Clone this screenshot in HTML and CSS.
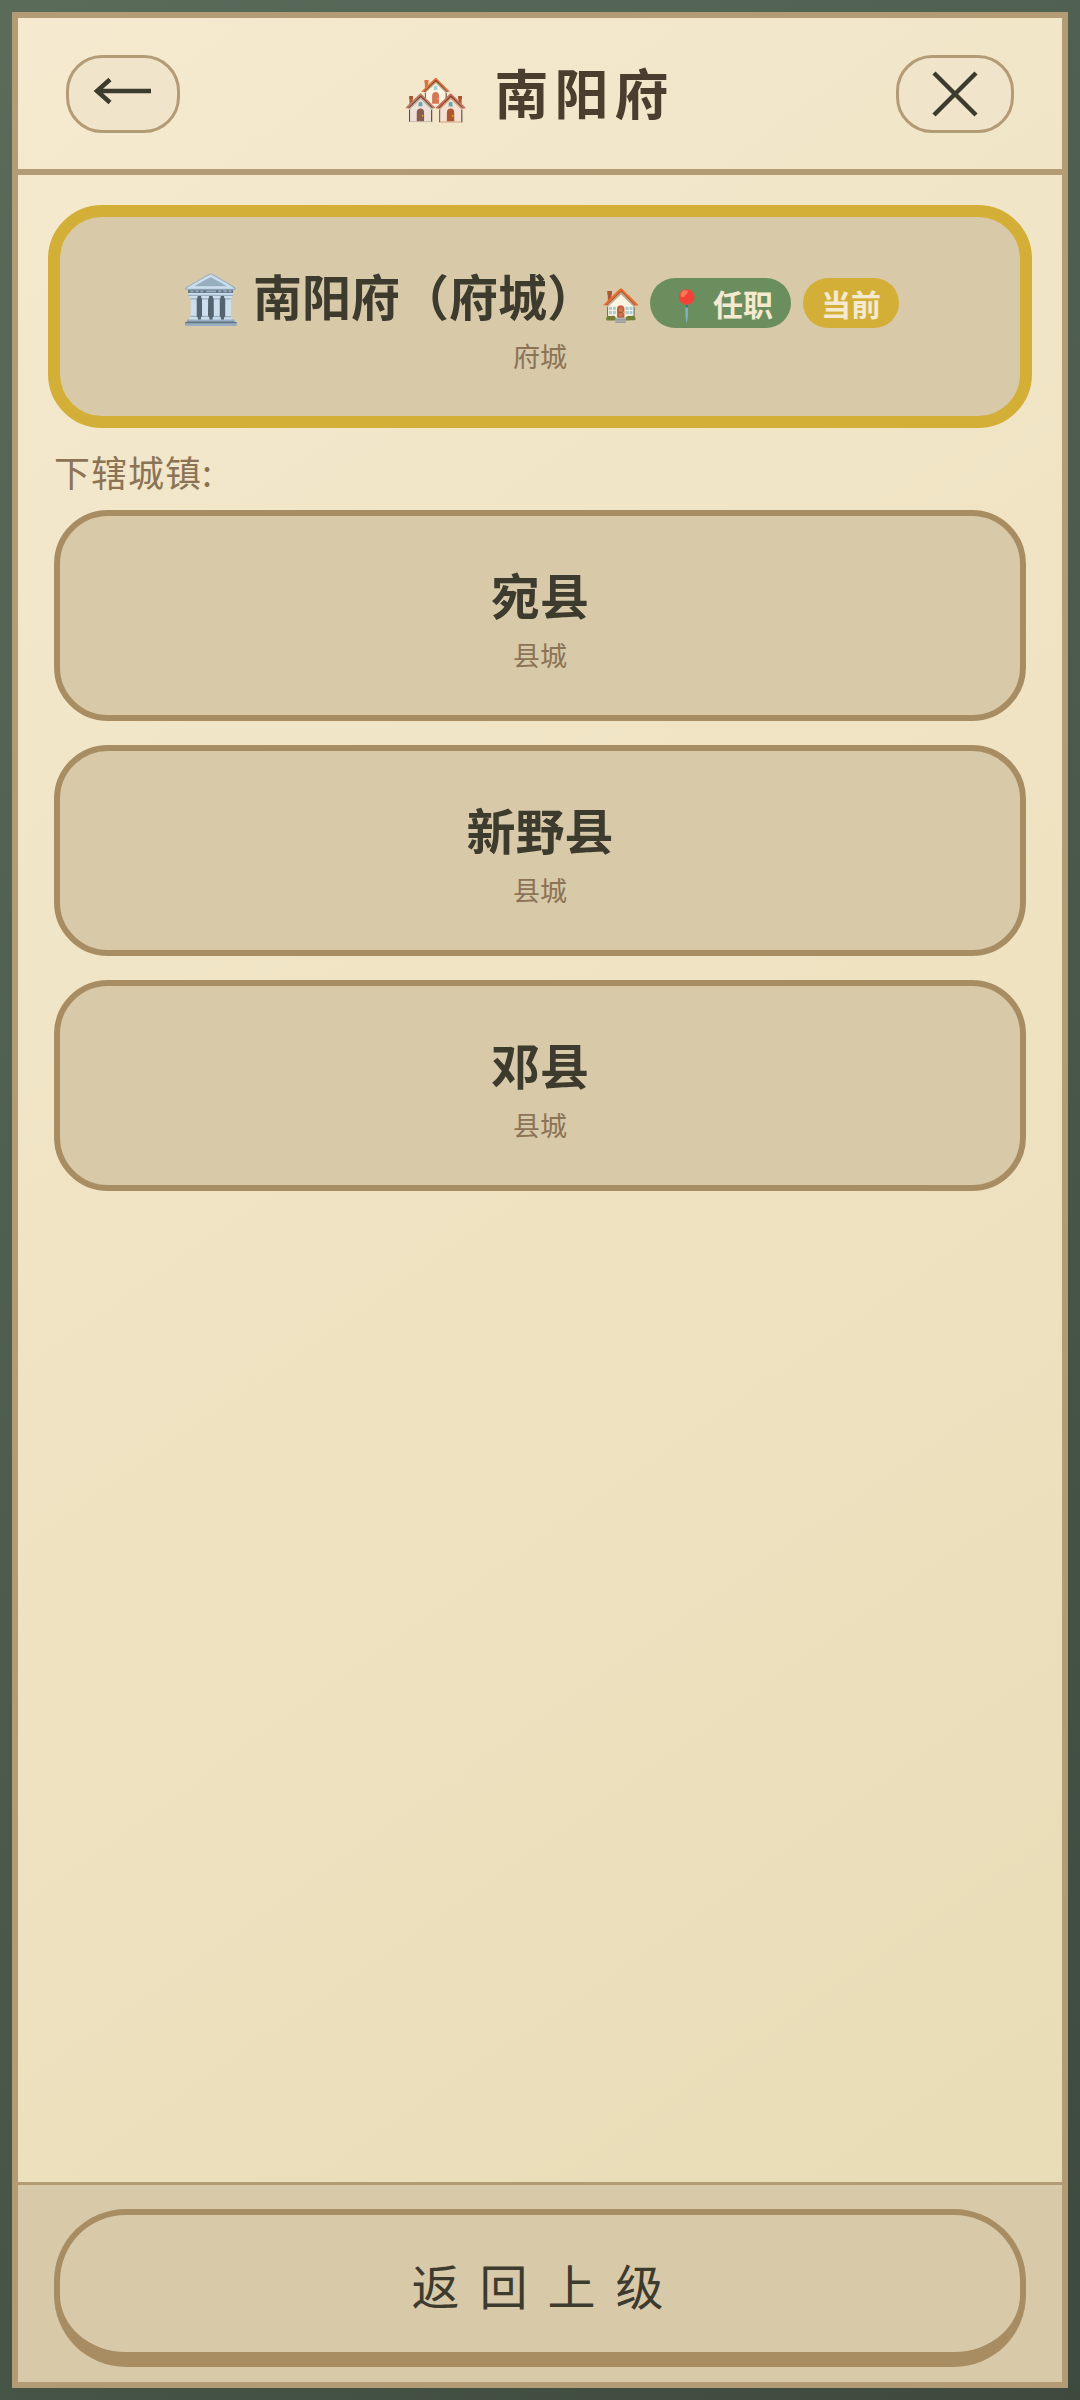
FILE: index.html
```html
<!DOCTYPE html>
<html lang="zh-CN">
<head>
<meta charset="utf-8">
<title>南阳府</title>
<link rel="stylesheet" href="styles.css">
</head>
<body>
<div class="frame">
  <header class="head">
    <button class="nav nav-back"><svg class="nav-icon" width="60" height="36" viewBox="0 0 60 36"><path d="M58 18H4M17 6.5 4 18 17 29.5" fill="none" stroke="#3d3a2e" stroke-width="4.5"/></svg></button>
    <h1 class="title"><span class="title-icon">🏘️</span><span class="title-text">南阳府</span></h1>
    <button class="nav nav-close"><svg class="nav-icon" width="48" height="48" viewBox="0 0 48 48"><path d="M3 3 45 45M45 3 3 45" fill="none" stroke="#3d3a2e" stroke-width="4.5"/></svg></button>
  </header>
  <main class="body">
    <section class="card card-current">
      <div class="card-line">
        <span class="card-icon">🏛️</span>
        <span class="card-name">南阳府（府城）</span>
        <span class="small-icon">🏠</span>
        <span class="badge badge-green"><span class="pin">📍</span>任职</span>
        <span class="badge badge-gold">当前</span>
      </div>
      <div class="card-sub">府城</div>
    </section>
    <div class="label">下辖城镇:</div>
    <section class="card"><div class="card-name">宛县</div><div class="card-sub">县城</div></section>
    <section class="card"><div class="card-name">新野县</div><div class="card-sub">县城</div></section>
    <section class="card"><div class="card-name">邓县</div><div class="card-sub">县城</div></section>
  </main>
  <footer class="foot"><button class="return">返回上级</button></footer>
</div>
</body>
</html>
```
FILE: styles.css
```css
* { box-sizing: border-box; }
html, body { height: 100%; }
body {
  margin: 0;
  padding: 12px;
  background: linear-gradient(135deg, #5a6b5a, #3d4a3d);
  font-family: "Noto Sans CJK SC", "Noto Sans", sans-serif;
  color: #3d3a2e;
}
.frame {
  height: 2376px;
  border: 6px solid #b39b75;
  background: linear-gradient(145deg, #f5e9cf, #e8dcb5);
  display: flex;
  flex-direction: column;
}
.head {
  height: 157px;
  flex: none;
  border-bottom: 6px solid #b39b75;
  padding: 37px 48px 0;
  display: flex;
  justify-content: space-between;
  align-items: flex-start;
}
.nav {
  height: 78px;
  border: 3px solid #b39b75;
  border-radius: 36px;
  background: #f0e5ca;
  padding: 0;
  display: flex;
  align-items: center;
  justify-content: center;
}
.nav-back { width: 114px; padding-bottom: 6px; }
.nav-close { width: 118px; }
.title {
  margin: 0;
  display: flex;
  align-items: center;
  gap: 26px;
  height: 72px;
  font-size: 54px;
  font-weight: 700;
  color: #4a3f2f;
  letter-spacing: 6px;
}
.title-icon { font-size: 54px; letter-spacing: 0; margin-top: 6px; }
.body {
  flex: 1;
  padding: 30px 30px 0;
  display: flex;
  flex-direction: column;
  align-items: center;
}
.card {
  width: 972px;
  height: 211px;
  margin-bottom: 24px;
  border: 6px solid #a98d62;
  border-radius: 54px;
  background: #d8c9a9;
  display: flex;
  flex-direction: column;
  align-items: center;
  justify-content: center;
  flex: none;
}
.card-current {
  width: 984px;
  height: 223px;
  margin-bottom: 0;
  border: 12px solid #d4af37;
}
.card-line { display: flex; align-items: center; }
.card-name { font-size: 49px; font-weight: 700; line-height: 74px; }
.card-sub { font-size: 27px; line-height: 40px; margin-top: 4px; color: #8b7355; }
.card-icon { font-size: 48px; margin-right: 12px; }
.small-icon { font-size: 32px; margin: 14px 9px 0 5px; }
.badge {
  height: 50px;
  margin-top: 16px;
  border-radius: 25px;
  padding: 0 18px;
  font-size: 30px;
  font-weight: 700;
  color: #f5e9cf;
  display: flex;
  align-items: center;
}
.badge-green { background: #6b8e5f; margin-right: 12px; }
.badge-gold { background: #d4af37; }
.pin { margin-right: 8px; }
.label {
  align-self: flex-start;
  margin: 17px 0 13px 6px;
  font-size: 36px;
  line-height: 52px;
  letter-spacing: 1px;
  color: #8b7355;
}
.foot {
  height: 200px;
  flex: none;
  border-top: 3px solid #b39b75;
  background: #d8c9a9;
  padding: 24px 30px 0;
  display: flex;
  justify-content: center;
}
.return {
  width: 972px;
  height: 158px;
  border: 6px solid #a98d62;
  border-bottom-width: 15px;
  border-radius: 72px;
  background: #d8c9a9;
  padding: 0 0 0 15px;
  font-family: inherit;
  font-size: 48px;
  letter-spacing: 20px;
  color: #3d3a2e;
}
```
